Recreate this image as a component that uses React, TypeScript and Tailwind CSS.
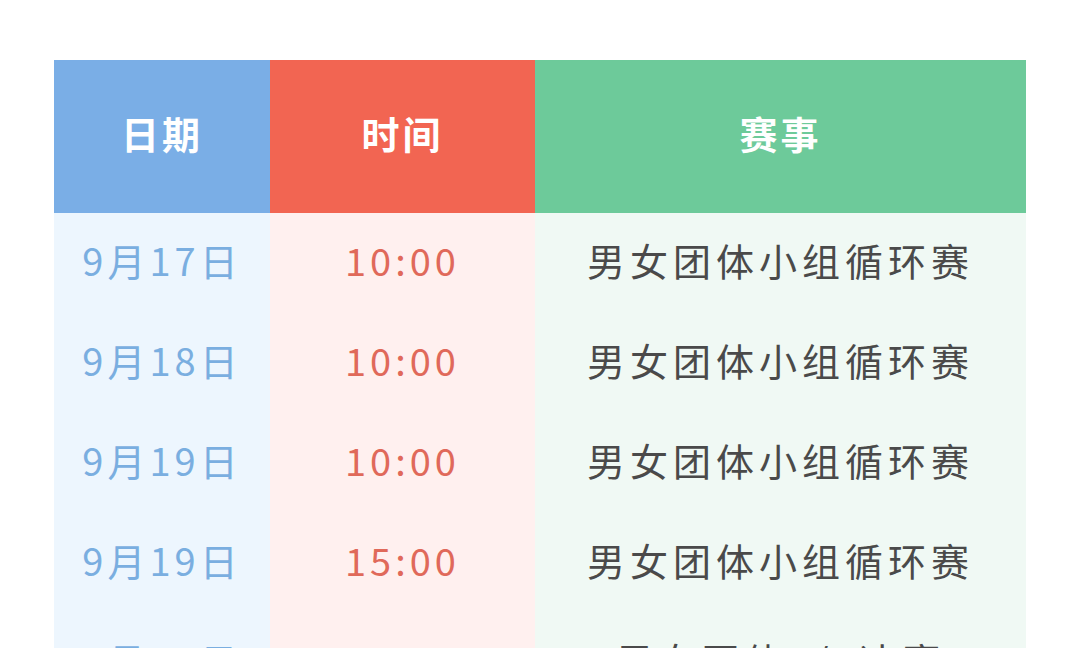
import React from "react";

interface Match {
  date: string;
  time: string;
  event: string;
}

const matches: Match[] = [
  { date: "9月17日", time: "10:00", event: "男女团体小组循环赛" },
  { date: "9月18日", time: "10:00", event: "男女团体小组循环赛" },
  { date: "9月19日", time: "10:00", event: "男女团体小组循环赛" },
  { date: "9月19日", time: "15:00", event: "男女团体小组循环赛" },
  { date: "9月20日", time: "10:00", event: "男女团体1/4决赛" },
];

export default function App() {
  return (
    <div
      className="w-[1080px] h-[648px] overflow-hidden bg-white px-[54px] pt-[60px]"
      style={{ fontFamily: '"Noto Sans CJK SC", "Noto Sans", sans-serif' }}
    >
      {/* 表头 */}
      <div className="grid grid-cols-[216px_265px_491px] h-[153px] text-white text-[38px] font-bold tracking-[3px]">
        <div className="flex items-center justify-center pb-[8px] bg-[#7aaee6]">日期</div>
        <div className="flex items-center justify-center pb-[8px] bg-[#f26552]">时间</div>
        <div className="flex items-center justify-center pb-[8px] bg-[#6dca9a]">赛事</div>
      </div>

      {/* 赛程 */}
      {matches.map((m, i) => (
        <div
          key={i}
          className="grid grid-cols-[216px_265px_491px] h-[100px] text-[38px] tracking-[4px]"
        >
          <div className="flex items-center justify-center pb-[8px] bg-[#edf6fe] text-[#7aaee0]">
            {m.date}
          </div>
          <div className="flex items-center justify-center pb-[8px] bg-[#fff0ef] text-[#e0695a]">
            {m.time}
          </div>
          <div className="flex items-center justify-center pb-[8px] bg-[#f0f9f4] text-[#4a4a4a] tracking-[5px]">
            {m.event}
          </div>
        </div>
      ))}
    </div>
  );
}
